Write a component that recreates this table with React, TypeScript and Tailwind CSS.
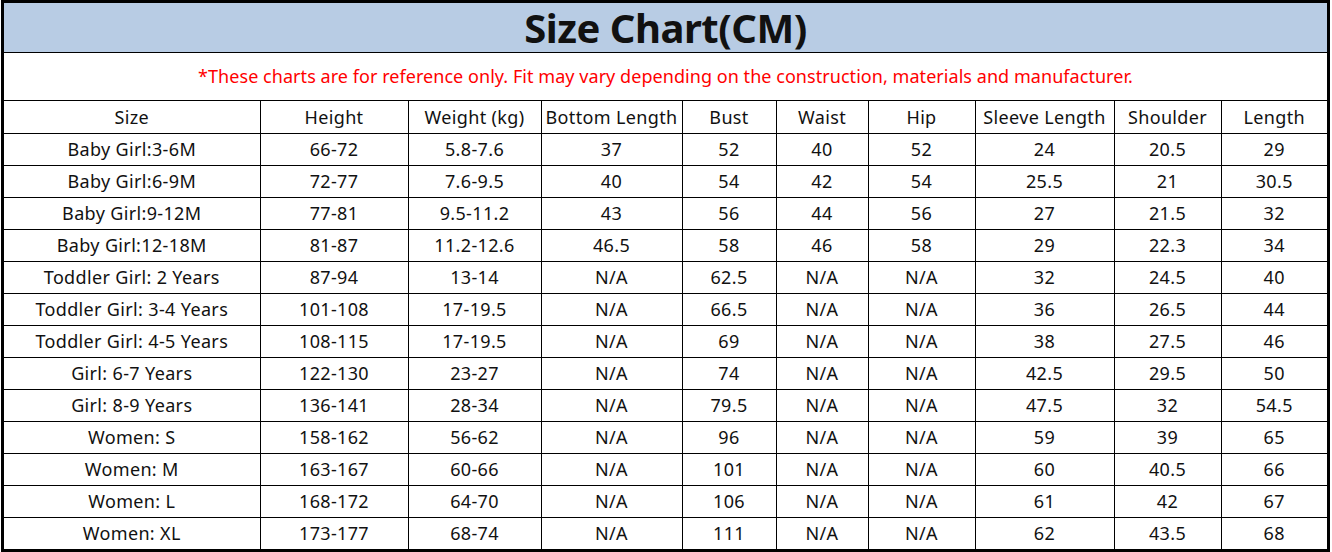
const headers = [
  "Size",
  "Height",
  "Weight (kg)",
  "Bottom Length",
  "Bust",
  "Waist",
  "Hip",
  "Sleeve Length",
  "Shoulder",
  "Length",
];

const colWidths = ["w-[256px]", "w-[148px]", "w-[133px]", "w-[141px]", "w-[94px]", "w-[92px]", "w-[107px]", "w-[139px]", "w-[107px]", "w-[106px]"];

const rows: string[][] = [
  ["Baby Girl:3-6M", "66-72", "5.8-7.6", "37", "52", "40", "52", "24", "20.5", "29"],
  ["Baby Girl:6-9M", "72-77", "7.6-9.5", "40", "54", "42", "54", "25.5", "21", "30.5"],
  ["Baby Girl:9-12M", "77-81", "9.5-11.2", "43", "56", "44", "56", "27", "21.5", "32"],
  ["Baby Girl:12-18M", "81-87", "11.2-12.6", "46.5", "58", "46", "58", "29", "22.3", "34"],
  ["Toddler Girl: 2 Years", "87-94", "13-14", "N/A", "62.5", "N/A", "N/A", "32", "24.5", "40"],
  ["Toddler Girl: 3-4 Years", "101-108", "17-19.5", "N/A", "66.5", "N/A", "N/A", "36", "26.5", "44"],
  ["Toddler Girl: 4-5 Years", "108-115", "17-19.5", "N/A", "69", "N/A", "N/A", "38", "27.5", "46"],
  ["Girl: 6-7 Years", "122-130", "23-27", "N/A", "74", "N/A", "N/A", "42.5", "29.5", "50"],
  ["Girl: 8-9 Years", "136-141", "28-34", "N/A", "79.5", "N/A", "N/A", "47.5", "32", "54.5"],
  ["Women: S", "158-162", "56-62", "N/A", "96", "N/A", "N/A", "59", "39", "65"],
  ["Women: M", "163-167", "60-66", "N/A", "101", "N/A", "N/A", "60", "40.5", "66"],
  ["Women: L", "168-172", "64-70", "N/A", "106", "N/A", "N/A", "61", "42", "67"],
  ["Women: XL", "173-177", "68-74", "N/A", "111", "N/A", "N/A", "62", "43.5", "68"],
];

export default function App() {
  return (
    <div className="h-[552px] w-[1332px] bg-white pl-px font-['Noto_Sans','Open_Sans',sans-serif] text-[#111]">
      <div className="w-[1329px] border-[3px] border-black">
        <div className="flex h-[50px] items-center justify-center border-b border-black bg-[#b8cce4] text-[40px] font-bold leading-none tracking-[-0.5px]">
          Size Chart(CM)
        </div>
        <div className="flex h-[48px] items-center justify-center border-b border-black text-[18px] tracking-[0.05px] text-[#ff0000]">
          *These charts are for reference only. Fit may vary depending on the construction, materials and manufacturer.
        </div>
        <table className="w-full table-fixed border-collapse text-center text-[18px] tracking-[0.35px]">
          <colgroup>
            {colWidths.map((w, i) => (
              <col key={i} className={w} />
            ))}
          </colgroup>
          <thead>
            <tr className="h-[32px]">
              {headers.map((h, i) => (
                <th key={h} className={`p-0 font-normal leading-none ${i < headers.length - 1 ? "border-r border-black" : ""} border-b border-black`}>
                  {h}
                </th>
              ))}
            </tr>
          </thead>
          <tbody>
            {rows.map((r, ri) => (
              <tr key={ri} className="h-[32px]">
                {r.map((c, ci) => (
                  <td
                    key={ci}
                    className={`p-0 leading-none ${ci < r.length - 1 ? "border-r border-black" : ""} ${ri < rows.length - 1 ? "border-b border-black" : ""}`}
                  >
                    {c}
                  </td>
                ))}
              </tr>
            ))}
          </tbody>
        </table>
      </div>
    </div>
  );
}
